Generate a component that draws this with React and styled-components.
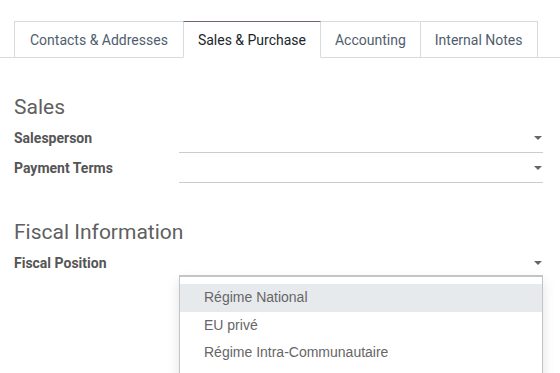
import styled, { createGlobalStyle } from 'styled-components';

const GlobalStyle = createGlobalStyle`
    body {
        margin: 0;
        background-color: #FFF;
        font-family: Roboto, "Noto Sans", sans-serif;
        overflow: hidden;
    }
`;

const Page = styled.div`
    width: 560px;
    height: 373px;
    overflow: hidden;
`;
const TabBar = styled.div`
    display: flex;
    margin-top: 21px;
    padding-left: 14px;
    border-bottom: 1px solid #D7DBE0;
`;
const Tab = styled.div`
    height: 35px;
    margin-bottom: -1px;
    margin-left: ${(props) => (props.first ? '0' : '-1px')};
    padding: 0 ${(props) => (props.first ? '15px' : '14px')};
    display: flex;
    align-items: center;
    box-sizing: content-box;
    font-size: 14px;
    color: ${(props) => (props.active ? '#212529' : '#4F5E6E')};
    background-color: #FFF;
    border: 1px solid #D7DBE0;
    border-top-color: ${(props) => (props.active ? '#7C6178' : '#D7DBE0')};
    border-bottom-color: ${(props) => (props.active ? '#FFF' : '#D7DBE0')};
    position: relative;
    z-index: ${(props) => (props.active ? 1 : 0)};
`;
const Sheet = styled.div`
    padding: 0 17px 0 14px;
`;
const SectionTitle = styled.h2`
    margin: ${(props) => props.top}px 0 4px;
    font-size: 21px;
    line-height: 24px;
    font-weight: normal;
    color: #5F5F5F;
`;
const Row = styled.div`
    display: flex;
    height: 30px;
`;
const Label = styled.div`
    width: 165px;
    display: flex;
    align-items: center;
    font-size: 14px;
    font-weight: bold;
    color: #555;
`;
const Field = styled.div`
    position: relative;
    flex: 1;
    display: flex;
    align-items: center;
    justify-content: flex-end;
    border-bottom: 1px solid #CCC;
`;
const Caret = styled.span`
    width: 0;
    height: 0;
    margin-right: 1px;
    border-top: 4px solid #666;
    border-left: 4px solid transparent;
    border-right: 4px solid transparent;
`;
const Menu = styled.ul`
    position: absolute;
    top: 27px;
    left: 0;
    right: 0;
    margin: 0;
    padding: 7px 0 20px;
    list-style: none;
    background-color: #FFF;
    border: 1px solid #C4C4C4;
    border-top-width: 2px;
    box-shadow: 0 6px 12px rgba(0, 0, 0, 0.12);
    z-index: 2;
`;
const Item = styled.li`
    padding: 4px 24px;
    line-height: 19.5px;
    font-family: "Liberation Sans", Arial, sans-serif;
    font-size: 14px;
    color: #666;
    background-color: ${(props) => (props.highlight ? '#E7EAED' : 'transparent')};
`;

const tabs = ['Contacts & Addresses', 'Sales & Purchase', 'Accounting', 'Internal Notes'];
const fiscalPositions = ['Régime National', 'EU privé', 'Régime Intra-Communautaire'];

const App = () => {
    return (
        <Page>
            <GlobalStyle />
            <TabBar>
                {tabs.map((tab, i) => (
                    <Tab key={tab} first={i === 0} active={i === 1}>{tab}</Tab>
                ))}
            </TabBar>
            <Sheet>
                <SectionTitle top={37}>Sales</SectionTitle>
                <Row>
                    <Label>Salesperson</Label>
                    <Field><Caret /></Field>
                </Row>
                <Row>
                    <Label>Payment Terms</Label>
                    <Field><Caret /></Field>
                </Row>
                <SectionTitle top={37}>Fiscal Information</SectionTitle>
                <Row>
                    <Label>Fiscal Position</Label>
                    <Field>
                        <Caret />
                        <Menu>
                            {fiscalPositions.map((name, i) => (
                                <Item key={name} highlight={i === 0}>{name}</Item>
                            ))}
                        </Menu>
                    </Field>
                </Row>
            </Sheet>
        </Page>
    );
};
export default App;
